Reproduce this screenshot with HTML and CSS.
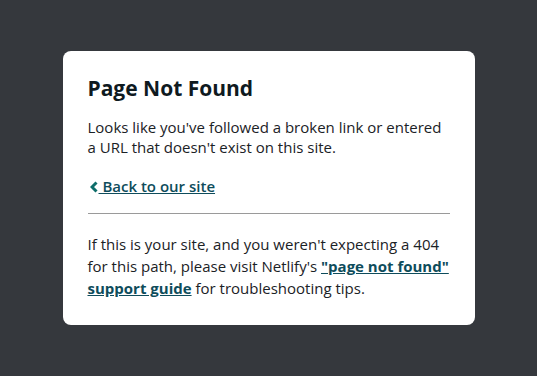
FILE: index.html
```html
<!DOCTYPE html>
<html lang="en">
<head>
    <meta charset="UTF-8">
    <meta name="viewport" content="width=device-width, initial-scale=1.0">
    <title>Page Not Found</title>
    <link rel="stylesheet" href="styles.css">
</head>
<body>
    <div class="container">
        <h1>Page Not Found</h1>
        <p class="intro">Looks like you've followed a broken link or entered a URL that doesn't exist on this site.</p>
        <p class="back">
            <a href="/"><svg class="chevron" viewBox="0 0 8 12" width="8" height="12"><path d="M6.5 1.5 2 6l4.5 4.5" fill="none" stroke="currentColor" stroke-width="3"/></svg> Back to our site</a>
        </p>
        <hr>
        <p class="help">If this is your site, and you weren't expecting a 404 for this path, please visit Netlify's <a href="#"><strong>"page not found" support guide</strong></a> for troubleshooting tips.</p>
    </div>
</body>
</html>
```

FILE: styles.css
```css
body {
    font-family: "Open Sans", "Noto Sans", sans-serif;
    background: #35383d;
    color: #1b2226;
    margin: 0;
    min-height: 100vh;
    display: flex;
    justify-content: center;
    align-items: center;
}

.container {
    background: #fff;
    border-radius: 8px;
    width: 362px;
    padding: 24px 25px 26px;
}

h1 {
    margin: 0 0 16px;
    font-size: 21px;
    line-height: 26px;
    font-weight: 700;
    color: #0f1a1f;
}

p {
    margin: 0;
    font-size: 15px;
    line-height: 20px;
}

.intro {
    margin-bottom: 19px;
}

a {
    color: #0e4c5b;
}

.back a {
    font-weight: 600;
}

.chevron {
    color: #0e6d6a;
    vertical-align: -1px;
    margin-left: 2px;
    margin-right: 1px;
}

hr {
    border: 0;
    border-top: 1px solid #9a9a9a;
    margin: 17px 0 19px;
}

.help {
    line-height: 22px;
}
```
